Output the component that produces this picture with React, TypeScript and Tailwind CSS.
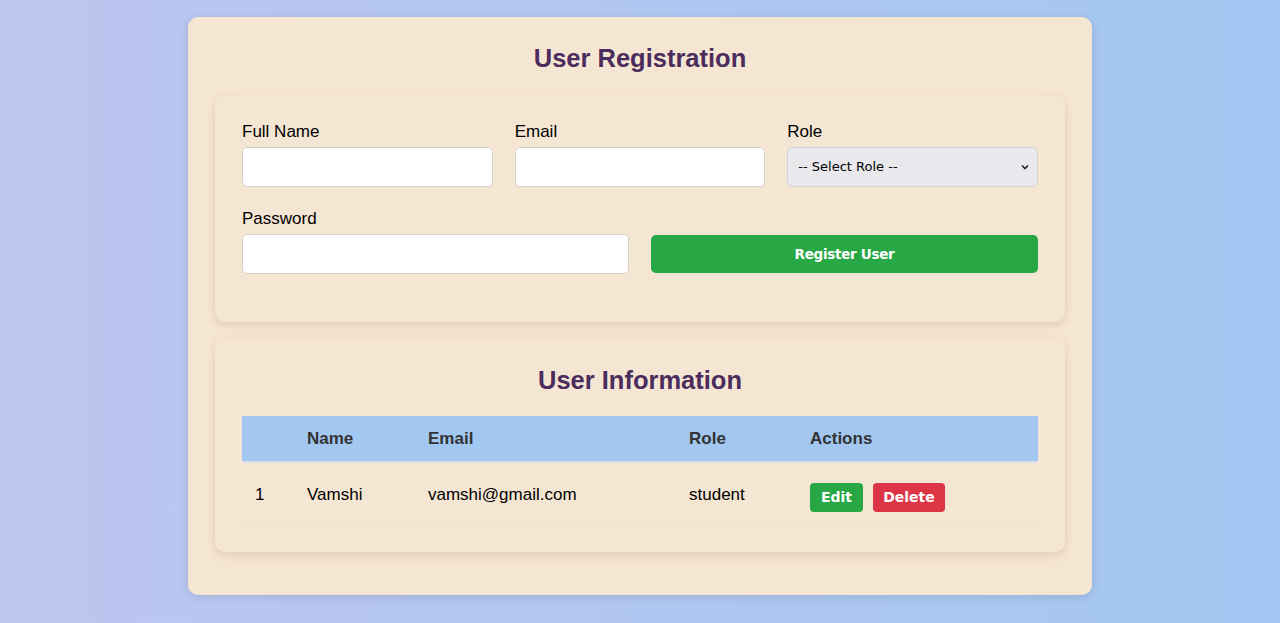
import { useState } from "react"

type User = { id: number; name: string; email: string; role: string }

const field =
  "w-full h-[40px] rounded-[5px] border border-[#d6d0c8] bg-white px-2.5 text-[15px] outline-none"

export default function App() {
  const [users] = useState<User[]>([
    { id: 1, name: "Vamshi", email: "vamshi@gmail.com", role: "student" },
  ])

  return (
    <div
      className="min-h-[623px] bg-gradient-to-r from-[#bdc6ef] to-[#a2c7f2] pt-[17px] pb-[28px]"
      style={{ fontFamily: "Arial, 'Liberation Sans', sans-serif" }}
    >
      <div className="mx-auto w-[904px] rounded-[10px] bg-[#f5e6d3] px-[27px] pt-[26px] pb-[43px] shadow-[0_2px_8px_rgba(0,0,0,0.12)]">
        <h1 className="text-center text-[25.5px] leading-[30px] font-bold text-[#4b2c5c]">User Registration</h1>

        {/* Form card */}
        <div className="mt-[22px] rounded-[10px] bg-[#f5e6d3] px-[27px] pt-[27px] pb-[48px] shadow-[0_3px_10px_rgba(120,90,50,0.18)]">
          <div className="grid grid-cols-3 gap-x-[22px]">
            <label className="flex flex-col gap-[5px]">
              <span className="text-[17px] leading-[20px] text-black">Full Name</span>
              <input className={field} />
            </label>
            <label className="flex flex-col gap-[5px]">
              <span className="text-[17px] leading-[20px] text-black">Email</span>
              <input className={field} />
            </label>
            <label className="flex flex-col gap-[5px]">
              <span className="text-[17px] leading-[20px] text-black">Role</span>
              <div className="relative">
                <select
                  defaultValue=""
                  className="h-[40px] w-full appearance-none rounded-[5px] border border-[#d3d1d6] bg-[#e9e8ec] pl-[10px] pr-6 text-[13px] text-black outline-none"
                  style={{ fontFamily: "'DejaVu Sans', sans-serif" }}
                >
                  <option value="">-- Select Role --</option>
                  <option value="student">student</option>
                  <option value="teacher">teacher</option>
                </select>
                <svg
                  className="pointer-events-none absolute right-[9px] top-[17px]"
                  width="8"
                  height="6"
                  viewBox="0 0 8 6"
                  fill="none"
                >
                  <path d="M1 1.5 L4 4.5 L7 1.5" stroke="#222" strokeWidth="1.6" />
                </svg>
              </div>
            </label>
          </div>

          <div className="mt-[22px] grid grid-cols-2 gap-x-[22px] items-end">
            <label className="flex flex-col gap-[5px]">
              <span className="text-[17px] leading-[20px] text-black">Password</span>
              <input type="password" className={field} />
            </label>
            <button
              className="mb-px h-[38px] rounded-[5px] bg-[#28a745] text-[13.5px] font-bold tracking-[-0.3px] text-white"
              style={{ fontFamily: "'DejaVu Sans', Verdana, sans-serif" }}
            >
              Register User
            </button>
          </div>
        </div>

        {/* Table card */}
        <div className="mt-[16px] rounded-[10px] bg-[#f5e6d3] px-[27px] pt-[27px] pb-[26px] shadow-[0_3px_10px_rgba(120,90,50,0.18)]">
          <h2 className="text-center text-[25.5px] leading-[30px] font-bold text-[#4b2c5c]">User Information</h2>
          <table className="mt-[21px] w-full border-collapse text-left text-[17px]">
            <thead>
              <tr className="h-[46px] bg-[#a2c7f1] border-b-2 border-[#d8dfe8] text-[#333]">
                <th className="w-[52px] px-[13px] font-bold"></th>
                <th className="w-[121px] px-[13px] font-bold">Name</th>
                <th className="w-[261px] px-[13px] font-bold">Email</th>
                <th className="w-[121px] px-[13px] font-bold">Role</th>
                <th className="px-[13px] font-bold">Actions</th>
              </tr>
            </thead>
            <tbody>
              {users.map((u) => (
                <tr key={u.id} className="h-[63px] border-b border-[#efe0cc] text-black">
                  <td className="px-[13px] pt-[1px]">{u.id}</td>
                  <td className="px-[13px] pt-[1px]">{u.name}</td>
                  <td className="px-[13px] pt-[1px]">{u.email}</td>
                  <td className="px-[13px] pt-[1px]">{u.role}</td>
                  <td className="px-[13px]">
                    <div
                      className="flex gap-[10px] pt-[8px]"
                      style={{ fontFamily: "'DejaVu Sans', Verdana, sans-serif" }}
                    >
                      <button className="h-[29px] w-[53px] rounded-[4px] bg-[#28a745] text-[14px] font-bold text-white">
                        Edit
                      </button>
                      <button className="h-[29px] w-[72px] rounded-[4px] bg-[#dc3545] text-[14px] font-bold text-white">
                        Delete
                      </button>
                    </div>
                  </td>
                </tr>
              ))}
            </tbody>
          </table>
        </div>
      </div>
    </div>
  )
}
